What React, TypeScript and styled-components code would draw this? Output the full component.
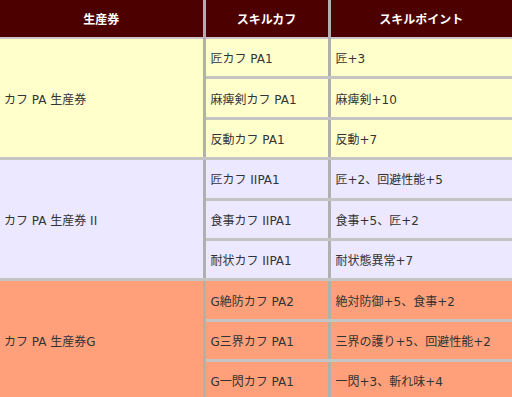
import React from 'react';
import styled, { createGlobalStyle } from 'styled-components';

const GlobalStyle = createGlobalStyle`
  html, body {
    margin: 0;
    padding: 0;
    background: #ffffff;
  }
  body {
    font-family: "DejaVu Sans", "Noto Sans CJK JP", sans-serif;
  }
`;

type Tone = 'yellow' | 'lavender' | 'salmon';

const toneColors: Record<Tone, string> = {
  yellow: '#ffffcc',
  lavender: '#ebe8ff',
  salmon: '#ffa07a',
};

interface Group {
  ticket: string;
  tone: Tone;
  rows: { cuff: string; points: string }[];
}

const groups: Group[] = [
  {
    ticket: 'カフ PA 生産券',
    tone: 'yellow',
    rows: [
      { cuff: '匠カフ PA1', points: '匠+3' },
      { cuff: '麻痺剣カフ PA1', points: '麻痺剣+10' },
      { cuff: '反動カフ PA1', points: '反動+7' },
    ],
  },
  {
    ticket: 'カフ PA 生産券 II',
    tone: 'lavender',
    rows: [
      { cuff: '匠カフ IIPA1', points: '匠+2、回避性能+5' },
      { cuff: '食事カフ IIPA1', points: '食事+5、匠+2' },
      { cuff: '耐状カフ IIPA1', points: '耐状態異常+7' },
    ],
  },
  {
    ticket: 'カフ PA 生産券G',
    tone: 'salmon',
    rows: [
      { cuff: 'G絶防カフ PA2', points: '絶対防御+5、食事+2' },
      { cuff: 'G三界カフ PA1', points: '三界の護り+5、回避性能+2' },
      { cuff: 'G一閃カフ PA1', points: '一閃+3、斬れ味+4' },
    ],
  },
];

const Table = styled.table`
  width: 512px;
  border-collapse: collapse;
  table-layout: fixed;
  font-size: 12px;
  color: #333333;
`;

const HeadCell = styled.th<{ $last?: boolean }>`
  height: 37px;
  padding: 0;
  background: #4d0000;
  color: #ffffff;
  font-weight: bold;
  font-size: 12px;
  text-align: center;
  border-right: ${p => (p.$last ? 'none' : '3px solid #b0b0b0')};
  border-bottom: 2px solid #c8c8c8;
`;

const Cell = styled.td<{ $tone: Tone; $last?: boolean }>`
  height: 37.4px;
  padding: 0 0 0 5px;
  background: ${p => toneColors[p.$tone]};
  vertical-align: middle;
  white-space: nowrap;
  border-right: ${p => (p.$last ? 'none' : '3px solid #b0b0b0')};
  border-bottom: 3px solid #c4c4c4;
`;

const TicketCell = styled(Cell)`
  padding-left: 4px;
`;

export default function App() {
  return (
    <>
      <GlobalStyle />
      <Table>
        <colgroup>
          <col style={{ width: 204 }} />
          <col style={{ width: 125 }} />
          <col />
        </colgroup>
        <thead>
          <tr>
            <HeadCell>生産券</HeadCell>
            <HeadCell>スキルカフ</HeadCell>
            <HeadCell $last>スキルポイント</HeadCell>
          </tr>
        </thead>
        <tbody>
          {groups.map(g =>
            g.rows.map((r, i) => (
              <tr key={g.ticket + r.cuff}>
                {i === 0 && (
                  <TicketCell $tone={g.tone} rowSpan={g.rows.length}>
                    {g.ticket}
                  </TicketCell>
                )}
                <Cell $tone={g.tone}>{r.cuff}</Cell>
                <Cell $tone={g.tone} $last>
                  {r.points}
                </Cell>
              </tr>
            ))
          )}
        </tbody>
      </Table>
    </>
  );
}
